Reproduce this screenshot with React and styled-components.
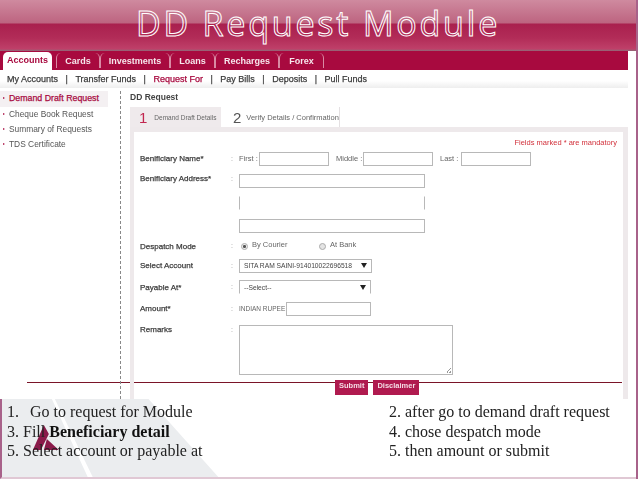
import React from 'react'
import styled, { createGlobalStyle } from 'styled-components'

const GlobalStyle = createGlobalStyle`
    html, body { margin: 0; padding: 0; background: #fff; }
    * { box-sizing: border-box; }
`;

const tabs = [
    { name: 'Accounts', w: 49, active: true },
    { name: 'Cards', w: 44 },
    { name: 'Investments', w: 70 },
    { name: 'Loans', w: 45 },
    { name: 'Recharges', w: 64 },
    { name: 'Forex', w: 45 },
];

const subLinks = ['My Accounts', 'Transfer Funds', 'Request For', 'Pay Bills', 'Deposits', 'Pull Funds'];
const sideLinks = ['Demand Draft Request', 'Cheque Book Request', 'Summary of Requests', 'TDS Certificate'];

const App = () => (
    <>
        <GlobalStyle />
        <Slide>
            <Header><Title>DD Request Module</Title></Header>
            <Rule />
            <Screen>
                <Nav>
                    {tabs.map((t) => (
                        <NavItem key={t.name} $active={t.active} $w={t.w}>{t.name}</NavItem>
                    ))}
                </Nav>
                <SubNav>
                    {subLinks.map((s, i) => (
                        <React.Fragment key={s}>
                            {i > 0 && <Pipe>|</Pipe>}
                            <SubLink $active={s === 'Request For'}>{s}</SubLink>
                        </React.Fragment>
                    ))}
                </SubNav>
                <Columns>
                    <Sidebar>
                        {sideLinks.map((s, i) => (
                            <SideItem key={s} $active={i === 0}>{s}</SideItem>
                        ))}
                    </Sidebar>
                    <Main>
                        <Heading>DD Request</Heading>
                        <StepTabs>
                            <StepTab $active $w={91}><StepNo $active>1</StepNo>Demand Draft Details</StepTab>
                            <StepTab $w={115}><StepNo>2</StepNo>Verify Details / Confirmation</StepTab>
                        </StepTabs>
                        <Panel>
                            <Mandatory>Fields marked * are mandatory</Mandatory>
                            <Row $h={23}>
                                <Label>Benificiary Name*</Label>
                                <Colon>:</Colon>
                                <Field>
                                    <Caption $w={20}>First :</Caption>
                                    <Input $w={70} />
                                    <Caption $w={27} $ml={7}>Middle :</Caption>
                                    <Input $w={70} />
                                    <Caption $w={21} $ml={7}>Last :</Caption>
                                    <Input $w={70} />
                                </Field>
                            </Row>
                            <Row $h={22} $top $pt={4}>
                                <Label>Benificiary Address*</Label>
                                <Colon>:</Colon>
                                <Input $w={186} />
                            </Row>
                            <Row $h={22}>
                                <Label />
                                <Colon />
                                <Input $w={186} $open />
                            </Row>
                            <Row $h={24}>
                                <Label />
                                <Colon />
                                <Input $w={186} />
                            </Row>
                            <Row $h={16}>
                                <Label>Despatch Mode</Label>
                                <Colon>:</Colon>
                                <Field>
                                    <Radio $checked />
                                    <Option $w={65}>By Courier</Option>
                                    <Radio />
                                    <Option>At Bank</Option>
                                </Field>
                            </Row>
                            <Row $h={23}>
                                <Label>Select Account</Label>
                                <Colon>:</Colon>
                                <Select $w={133}>
                                    SITA RAM SAINI-914010022696518
                                    <Arrow viewBox="0 0 6 5"><path d="M0 0h6L3 5z" /></Arrow>
                                </Select>
                            </Row>
                            <Row $h={20}>
                                <Label>Payable At*</Label>
                                <Colon>:</Colon>
                                <Select $w={132} $open>
                                    --Select--
                                    <Arrow viewBox="0 0 6 5"><path d="M0 0h6L3 5z" /></Arrow>
                                </Select>
                            </Row>
                            <Row $h={23}>
                                <Label>Amount*</Label>
                                <Colon>:</Colon>
                                <Field>
                                    <RupeeCaption>INDIAN RUPEE</RupeeCaption>
                                    <Input $w={85} />
                                </Field>
                            </Row>
                            <Row $h={55} $top $pt={5}>
                                <Label>Remarks</Label>
                                <Colon>:</Colon>
                                <TextArea />
                            </Row>
                            <Actions>
                                <ActionButton>Submit</ActionButton>
                                <ActionButton>Disclaimer</ActionButton>
                            </Actions>
                        </Panel>
                    </Main>
                </Columns>
            </Screen>
            <Notes>
                <NotesArt viewBox="0 0 636 78" preserveAspectRatio="none">
                    <path d="M0 0H50L86 78H0z" fill="#ebedef" />
                    <path d="M53 0H147L217 78H91z" fill="#ebedef" />
                    <path d="M42 26L31 51H39L47 35zM45 40L57 51H42z" fill="#8a1a4a" />
                </NotesArt>
                <NoteColumn>
                    <Note>1.<NoteGap />Go to request for Module</Note>
                    <Note>3. Fill <strong>Beneficiary detail</strong></Note>
                    <Note>5. Select account or payable at</Note>
                </NoteColumn>
                <NoteColumn>
                    <Note>2. after go to demand draft request</Note>
                    <Note>4. chose despatch mode</Note>
                    <Note>5. then amount or submit</Note>
                </NoteColumn>
            </Notes>
        </Slide>
    </>
);

export default App;

const Slide = styled.div`
    position: relative;
    width: 638px;
    height: 479px;
    overflow: hidden;
    background: #fff;
    border-right: 2px solid #a8628a;
    display: flex;
    flex-direction: column;
`;

const Header = styled.header`
    height: 51px;
    flex: none;
    display: flex;
    justify-content: center;
    padding-top: 1px;
    background: linear-gradient(#cf8a9f 0, #bd6480 23px, #a9204e 24px, #b22c58 38px, #bf4069 49px, #8d6a78 51px);
`;

const Title = styled.h1`
    margin: 0;
    font: 400 34px/44px "Open Sans", "DejaVu Sans", sans-serif;
    letter-spacing: 2.8px;
    white-space: pre;
    color: transparent;
    -webkit-text-stroke: 1px #fff;
`;

const Screen = styled.div`
    height: 348px;
    flex: none;
    font-family: "Liberation Sans", Arial, sans-serif;
    filter: blur(0.35px);
    display: flex;
    flex-direction: column;
`;

const Nav = styled.nav`
    height: 19px;
    width: 628px;
    flex: none;
    padding: 1px 0 0 3px;
    background: #a80a3f;
    display: flex;
`;

const NavItem = styled.div`
    width: ${(p) => p.$w}px;
    margin-right: ${(p) => (p.$active ? 5 : 0)}px;
    border-radius: 5px 5px 0 0;
    background: ${(p) => (p.$active ? '#fff' : 'transparent')};
    color: ${(p) => (p.$active ? '#a80a3f' : '#f6e6ec')};
    border-right: ${(p) => (p.$active ? 'none' : '1px solid #d98aa4')};
    border-left: ${(p) => (p.$active ? 'none' : '1px solid #d98aa4')};
    margin-left: ${(p) => (p.$active ? 0 : -1)}px;
    height: ${(p) => (p.$active ? 18 : 15)}px;
    font-size: 9px;
    font-weight: 700;
    line-height: 16px;
    text-align: center;
    &:not(:first-child) { margin-right: 1px; margin-top: 1px; }
`;

const SubNav = styled.div`
    width: 628px;
    height: 18px;
    flex: none;
    padding-left: 7px;
    background: linear-gradient(#fff 60%, #eeeeee);
    display: flex;
    align-items: center;
    font-size: 9px;
    -webkit-text-stroke: 0.25px currentColor;
`;

const SubLink = styled.span`
    color: ${(p) => (p.$active ? '#a80a3f' : '#3c3c3c')};
    white-space: nowrap;
`;

const Pipe = styled.span`
    color: #444;
    margin: 0 7.5px;
`;

const Columns = styled.div`
    flex: 1;
    min-height: 0;
    display: flex;
    padding-top: 3px;
`;

const Sidebar = styled.aside`
    width: 121px;
    flex: none;
    padding-right: 12px;
    border-right: 1px dashed #888;
`;

const SideItem = styled.div`
    position: relative;
    height: ${(p) => (p.$active ? 16 : 15)}px;
    padding-left: 9px;
    background: ${(p) => (p.$active ? '#f4f0f2' : 'transparent')};
    color: ${(p) => (p.$active ? '#a80a3f' : '#555')};
    font-size: ${(p) => (p.$active ? 8.8 : 8.4)}px;
    -webkit-text-stroke: ${(p) => (p.$active ? '0.25px currentColor' : '0')};
    line-height: 15px;
    white-space: nowrap;
    &::before {
        content: '';
        position: absolute;
        left: 3px;
        top: 6px;
        border-left: 2px solid #a80a3f;
        border-top: 1.5px solid transparent;
        border-bottom: 1.5px solid transparent;
    }
`;

const Main = styled.main`
    width: 498px;
    margin-left: 9px;
    flex: none;
    display: flex;
    flex-direction: column;
`;

const Heading = styled.div`
    height: 16px;
    color: #444;
    font-size: 8.5px;
    font-weight: 700;
    line-height: 12px;
`;

const StepTabs = styled.div`
    height: 20px;
    flex: none;
    display: flex;
    gap: 4px;
`;

const StepTab = styled.div`
    width: ${(p) => p.$w}px;
    padding-left: ${(p) => (p.$active ? 9 : 8)}px;
    display: flex;
    align-items: center;
    background: ${(p) => (p.$active ? '#efeaec' : '#fff')};
    border-right: ${(p) => (p.$active ? 'none' : '1px solid #e4e0e2')};
    color: #666;
    font-size: ${(p) => (p.$active ? 6.5 : 7.5)}px;
    white-space: nowrap;
`;

const StepNo = styled.span`
    margin-right: ${(p) => (p.$active ? 7 : 5)}px;
    color: ${(p) => (p.$active ? '#c2264f' : '#555')};
    font-size: 15px;
`;

const Panel = styled.section`
    flex: 1;
    padding: 3px 0 0 6px;
    border: solid #eee9eb;
    border-width: 5px 5px 0 4px;
    display: flex;
    flex-direction: column;
`;

const Mandatory = styled.div`
    height: 12px;
    padding-right: 6px;
    text-align: right;
    color: #d2323c;
    font-size: 7.5px;
    line-height: 16px;
`;

const Row = styled.div`
    height: ${(p) => p.$h}px;
    padding-top: ${(p) => p.$pt || 0}px;
    flex: none;
    display: flex;
    align-items: ${(p) => (p.$top ? 'flex-start' : 'center')};
`;

const Label = styled.div`
    width: 91px;
    flex: none;
    color: #3c3c3c;
    font-size: 8px;
    -webkit-text-stroke: 0.25px currentColor;
    white-space: nowrap;
`;

const Colon = styled.div`
    width: 8px;
    flex: none;
    color: #999;
    font-size: 7px;
    line-height: 10px;
`;

const Field = styled.div`
    display: flex;
    align-items: center;
`;

const Caption = styled.span`
    width: ${(p) => p.$w}px;
    margin-left: ${(p) => p.$ml || 0}px;
    flex: none;
    color: #666;
    font-size: 7.5px;
    white-space: nowrap;
`;

const RupeeCaption = styled.span`
    width: 47px;
    flex: none;
    color: #666;
    font-size: 6.5px;
    white-space: nowrap;
`;

const Input = styled.div`
    width: ${(p) => p.$w}px;
    height: 14px;
    flex: none;
    background: #fff;
    border: 1px solid #b8b8b8;
    border-top-color: ${(p) => (p.$open ? 'transparent' : '#b8b8b8')};
    border-bottom-color: ${(p) => (p.$open ? 'transparent' : '#b8b8b8')};
`;

const Radio = styled.span`
    width: 7px;
    height: 7px;
    margin-left: 2px;
    margin-right: 4px;
    flex: none;
    border-radius: 50%;
    border: 1px solid #aaa;
    background: ${(p) => (p.$checked ? 'radial-gradient(#555 35%, #eee 50%)' : '#e4e4e4')};
`;

const Option = styled.span`
    width: ${(p) => (p.$w ? `${p.$w}px` : 'auto')};
    margin-top: -3px;
    flex: none;
    color: #666;
    font-size: 7.5px;
    white-space: nowrap;
`;

const Select = styled.div`
    width: ${(p) => p.$w}px;
    height: 14px;
    padding: 0 4px;
    flex: none;
    display: flex;
    align-items: center;
    justify-content: space-between;
    border: 1px solid #b8b8b8;
    border-bottom-color: ${(p) => (p.$open ? 'transparent' : '#b8b8b8')};
    color: #444;
    font-size: 6.7px;
    white-space: nowrap;
`;

const Arrow = styled.svg`
    width: 6px;
    height: 5px;
    flex: none;
    fill: #222;
`;

const TextArea = styled.div`
    position: relative;
    width: 214px;
    height: 50px;
    flex: none;
    border: 1px solid #b8b8b8;
    &::after {
        content: '';
        position: absolute;
        right: 1px;
        bottom: 1px;
        width: 5px;
        height: 5px;
        background: linear-gradient(135deg, transparent 50%, #999 50%, #999 60%, transparent 60%, transparent 75%, #999 75%);
    }
`;

const Actions = styled.div`
    margin-top: 5px;
    padding-left: 195px;
    display: flex;
    gap: 5px;
`;

const ActionButton = styled.div`
    height: 15px;
    padding: 0 4px;
    background: #b01a4f;
    color: #f4dce5;
    font-size: 7.5px;
    font-weight: 700;
    line-height: 12px;
`;

const Notes = styled.div`
    position: relative;
    flex: 1;
    min-height: 0;
    padding: 3px 0 0 5px;
    border-left: 2px solid #a8628a;
    border-bottom: 2px solid #e0c8d4;
    display: grid;
    grid-template-columns: 382px 1fr;
    font: 16px/19.5px "Liberation Serif", "Times New Roman", serif;
    color: #222;
`;

const NotesArt = styled.svg`
    position: absolute;
    left: 0;
    top: 0;
    width: 100%;
    height: 100%;
`;

const NoteColumn = styled.div`
    position: relative;
`;

const Note = styled.div`
    white-space: nowrap;
    strong { color: #111; }
`;

const NoteGap = styled.span`
    display: inline-block;
    width: 11px;
`;

const Rule = styled.div`
    position: absolute;
    left: 27px;
    top: 382px;
    width: 595px;
    height: 1px;
    background: #7a1428;
`;
